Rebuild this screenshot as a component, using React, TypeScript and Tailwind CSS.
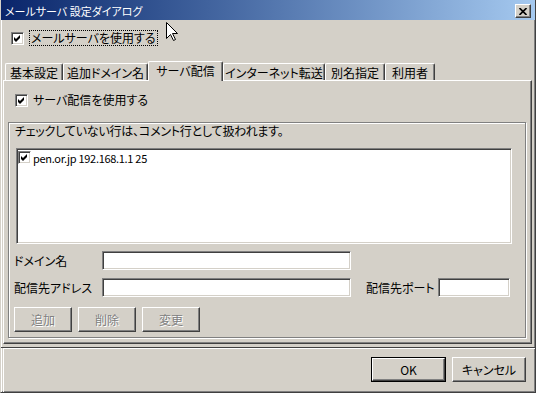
import React from "react"

const face = "font-['Noto_Sans_CJK_JP','Noto_Sans_CJK_SC',sans-serif] [font-feature-settings:'palt']"

// classic 3d edges
const sunken =
  "border border-t-[#808080] border-l-[#808080] border-r-white border-b-white shadow-[inset_1px_1px_0_#404040,inset_-1px_-1px_0_#d4d0c8]"
const raised =
  "border border-t-white border-l-white border-r-[#404040] border-b-[#404040] shadow-[inset_-1px_-1px_0_#808080]"

function Check({ checked = true }: { checked?: boolean }) {
  return (
    <span className={`relative block w-[13px] h-[13px] shrink-0 bg-white ${sunken}`}>
      {checked && (
        <svg className="absolute left-0 top-0" width="11" height="11" viewBox="0 0 11 11">
          <path d="M2 4 L4 6 L8 2 L8 5 L4 9 L2 7 Z" fill="#000" />
        </svg>
      )}
    </span>
  )
}

function Tab({ label, w, active = false }: { label: string; w: string; active?: boolean }) {
  if (active) {
    return (
      <div
        className={`${w} relative z-10 h-[20px] -mb-px bg-[#d4d0c8] border-t border-l border-r border-t-white border-l-white border-r-[#404040] shadow-[inset_-1px_0_0_#808080] rounded-tl-[2px] rounded-tr-[2px] flex justify-center pt-[2px]`}
      >
        {label}
      </div>
    )
  }
  return (
    <div
      className={`${w} h-[17px] border-t border-l border-r border-t-white border-l-white border-r-[#404040] shadow-[inset_-1px_0_0_#808080] rounded-tl-[2px] rounded-tr-[2px] flex justify-center pt-[2px]`}
    >
      {label}
    </div>
  )
}

function Button({ label, w, disabled = false, def = false }: { label: string; w: string; disabled?: boolean; def?: boolean }) {
  const inner = (
    <div
      className={`h-full w-full ${raised} flex items-center justify-center ${
        disabled ? "text-[#808080] [text-shadow:1px_1px_0_#fff]" : "text-black"
      }`}
    >
      {label}
    </div>
  )
  if (def) {
    return <div className={`${w} h-[25px] border border-black`}>{inner}</div>
  }
  return <div className={`${w} h-[25px]`}>{inner}</div>
}

export default function App() {
  return (
    <div
      className={`${face} relative w-[536px] h-[393px] bg-[#d4d0c8] text-[12px] leading-[14px] text-black flex flex-col overflow-hidden border-l border-r border-b border-l-[#d4d0c8] border-r-[#404040] border-b-[#404040] shadow-[inset_1px_0_0_#fff,inset_-1px_-1px_0_#808080]`}
    >
      {/* ===== title bar ===== */}
      <div className="h-[20px] shrink-0 -mx-px flex items-start bg-linear-to-r from-[#0a246a] to-[#a6caf0] pl-[5px] pr-[5px]">
        <span className="text-white text-[11px] mt-[4px] leading-[14px]">メールサーバ 設定ダイアログ</span>
        <div className={`ml-auto mt-[4px] w-[16px] h-[14px] bg-[#d4d0c8] ${raised} flex items-center justify-center`}>
          <svg width="8" height="7" viewBox="0 0 8 7">
            <path d="M0.5 0 L7.5 7 M7.5 0 L0.5 7" stroke="#000" strokeWidth="1.6" />
          </svg>
        </div>
      </div>

      {/* ===== main area ===== */}
      <div className="h-[328px] shrink-0 flex flex-col border-b border-b-[#404040]">
        <div className="mt-[10px] h-[16px] flex items-center pl-[10px]">
          <Check />
          <span className="ml-[5px] h-[16px] px-[1px] border border-dotted border-black flex items-center">
            メールサーバを使用する
          </span>
        </div>

        {/* tabs */}
        <div className="mt-[14px] h-[20px] flex items-end pl-[4px]">
          <Tab label="基本設定" w="w-[58px]" />
          <Tab label="追加ドメイン名" w="w-[85px]" />
          <Tab label="サーバ配信" w="w-[75px]" active />
          <Tab label="インターネット転送" w="w-[102px]" />
          <Tab label="別名指定" w="w-[60px]" />
          <Tab label="利用者" w="w-[50px]" />
        </div>

        {/* tab page */}
        <div className={`ml-[2px] mr-[3px] h-[264px] ${raised} flex flex-col`}>
          <div className="mt-[11px] h-[16px] flex items-center pl-[11px]">
            <Check />
            <span className="ml-[5px]">サーバ配信を使用する</span>
          </div>

          {/* group */}
          <div className="mt-[14px] ml-[4px] mr-[5px] h-[216px] border border-[#808080] shadow-[inset_1px_1px_0_#fff,1px_1px_0_#fff] flex flex-col">
            <div className="mt-[1px] pl-[6px] h-[14px] tracking-[-0.2px]">チェックしていない行は、コメント行として扱われます。</div>

            <div className={`mt-[10px] ml-[7px] w-[496px] h-[96px] bg-white ${sunken} pl-[1px] pt-[2px]`}>
              <div className="flex items-center gap-[2px] h-[13px]">
                <Check />
                <span className="text-[11px] tracking-[-0.3px]">pen.or.jp 192.168.1.1 25</span>
              </div>
            </div>

            <div className="mt-[7px] flex items-center pl-[5px] h-[19px]">
              <span className="w-[88px]">ドメイン名</span>
              <div className={`w-[249px] h-[19px] bg-white ${sunken}`} />
            </div>

            <div className="mt-[8px] flex items-center pl-[5px] h-[19px]">
              <span className="w-[88px]">配信先アドレス</span>
              <div className={`w-[249px] h-[19px] bg-white ${sunken}`} />
              <span className="ml-[15px] w-[72px]">配信先ポート</span>
              <div className={`w-[72px] h-[19px] bg-white ${sunken}`} />
            </div>

            <div className="mt-[10px] flex gap-[6px] pl-[5px]">
              <Button label="追加" w="w-[58px]" disabled />
              <Button label="削除" w="w-[58px]" disabled />
              <Button label="変更" w="w-[58px]" disabled />
            </div>
          </div>
        </div>
      </div>

      {/* ===== bottom buttons ===== */}
      <div className="flex-1 border-t border-l border-t-white border-l-white ml-[2px] flex justify-end items-start pt-[8px] pr-[9px] gap-[6px]">
        <Button label="OK" w="w-[75px]" def />
        <Button label="キャンセル" w="w-[74px]" />
      </div>

      {/* mouse pointer */}
      <svg className="absolute left-[165px] top-[22px]" width="13" height="20" viewBox="0 0 13 20">
        <path
          d="M0.5 0.5 L0.5 16.5 L4.5 12.5 L7.5 18.5 L9.5 17.5 L6.5 11.5 L11.5 11.5 Z"
          fill="#fff"
          stroke="#000"
          strokeWidth="1"
        />
      </svg>
    </div>
  )
}
